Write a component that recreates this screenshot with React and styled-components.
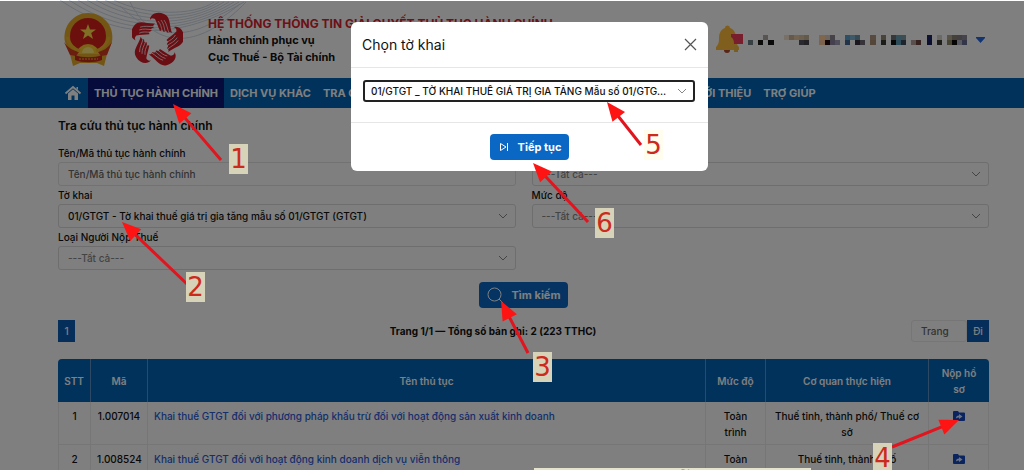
import React from 'react';
import styled, { createGlobalStyle } from 'styled-components';

const GlobalStyle = createGlobalStyle`
* { box-sizing: border-box; }
body {
  margin: 0;
  background: #fff;
  color: #111;
  font-family: Inter, "Noto Sans", sans-serif;
  font-size: 10px;
  font-weight: 500;
}
button, input, select { font: inherit; color: inherit; margin: 0; }
h1, h2, p { margin: 0; }
a { text-decoration: none; }
`

const Page = styled.div`
position: relative;
height: 100vh;
overflow: hidden;
`

const Header = styled.header`
position: relative;
display: flex;
align-items: center;
height: 78px;
padding: 2px 39px 0 62px;
`

const Waves = styled.svg`
position: absolute;
top: 0;
left: 60px;
`

const Logos = styled.div`
position: relative;
display: flex;
gap: 17px;
margin-right: 25px;
`

const SiteName = styled.div`
position: relative;
flex: 1;
font-size: 11px;
font-weight: 700;
line-height: 17px;
white-space: nowrap;

h1 {
  color: #d8222c;
  font-size: 12px;
  font-weight: 700;
  line-height: 17px;
}
`

const Account = styled.button`
display: flex;
align-items: center;
gap: 4px;
padding: 0;
border: 0;
background: none;
`

const Nav = styled.nav`
display: flex;
height: 30px;
padding-left: 58px;
background: #0064b8;
white-space: nowrap;
`

const NavLink = styled.a`
display: flex;
align-items: center;
padding: 0 6px;
color: #fff;
font-size: 11px;
font-weight: 700;
background: ${props => props.$active ? '#0a1878' : 'none'};
`

const Main = styled.main`
padding: 9px 35px 0 58px;
`

const H2 = styled.h2`
margin-bottom: 9px;
font-size: 12px;
font-weight: 600;
line-height: 18px;
`

const Fields = styled.div`
display: grid;
grid-template-columns: 1fr 1fr;
column-gap: 16px;
`

const Label = styled.label`
display: block;
height: 18px;
line-height: 18px;
`

const SelectBox = styled.div`
position: relative;

svg {
  position: absolute;
  top: 8px;
  right: 8px;
  pointer-events: none;
}
`

const Select = styled.select`
appearance: none;
display: block;
width: 100%;
height: 24px;
padding: 0 24px 0 9px;
border: 1px solid #dcdcdc;
border-radius: 3px;
background: #fff;
color: ${props => props.$empty ? '#888' : '#111'};
text-overflow: ellipsis;
`

const Input = styled.input`
display: block;
width: 100%;
height: ${props => props.$small ? '22px' : '24px'};
padding: 0 9px;
border: 1px solid ${props => props.$small ? '#ececec' : '#e4e4e4'};
border-radius: 3px;
background: #fff;

&::placeholder { color: #666; opacity: 1; }
`

const Button = styled.button`
display: flex;
align-items: center;
gap: 8px;
height: 26px;
padding: 0 8px;
border: 0;
border-radius: 4px;
background: #0a68c4;
color: #fff;
font-size: 11px;
font-weight: 700;
`

const Center = styled.div`
display: flex;
justify-content: center;
padding-top: 12px;
`

const Pager = styled.div`
display: grid;
grid-template-columns: 17px 1fr 78px;
align-items: center;
margin: 12px 0 17px;

p {
  font-weight: 700;
  text-align: center;
}
`

const Square = styled.button`
width: ${props => props.$wide ? '22px' : '17px'};
height: 22px;
padding: 0;
border: 0;
flex: none;
background: #0a5cb4;
color: #fff;
`

const GoTo = styled.div`
display: flex;
`

const Table = styled.table`
width: 100%;
table-layout: fixed;
border-spacing: 0;
line-height: 16px;
text-align: center;

th {
  height: 43px;
  padding: 0 6px;
  border-right: 1px solid #5c92c8;
  background: #0064b8;
  color: #fff;
  font-weight: 600;
}
th:first-child { border-top-left-radius: 4px; }
th:last-child { border-top-right-radius: 4px; border-right: 0; }
td {
  height: 43px;
  padding: 6px 6px 4px;
  border-right: 1px solid #ececec;
  border-bottom: 1px solid #ececec;
  vertical-align: top;
}
td:first-child { border-left: 1px solid #ececec; }
td:nth-child(3) { text-align: left; }
td a { color: #2c5cd8; }
td svg { display: block; margin: 3px auto; }
`

const Backdrop = styled.div`
position: absolute;
inset: 1px 0 0;
display: flex;
justify-content: center;
align-items: flex-start;
padding: 21px 0 0 35px;
background: rgba(0, 0, 0, 0.5);
`

const Modal = styled.section`
width: 357px;
border-radius: 6px;
background: #fff;
`

const ModalHeader = styled.header`
display: flex;
justify-content: space-between;
align-items: center;
height: 46px;
padding: 0 11px;
border-bottom: 1px solid #e6e6e6;

h2 { font-size: 14px; font-weight: 400; }
button { display: flex; padding: 0; border: 0; background: none; }
`

const ModalBody = styled.div`
padding: 12px 13px 20px 12px;

select {
  height: 22px;
  padding-right: 24px;
  padding-left: 6px;
  border: 2px solid #222;
}
svg { top: 7px; }
`

const ModalFooter = styled.footer`
display: flex;
justify-content: center;
padding: 11px 0;
border-top: 1px solid #e6e6e6;
`

const Arrows = styled.svg`
position: absolute;
top: 0;
left: 0;
pointer-events: none;
`

const Step = styled.span`
position: absolute;
top: ${props => props.$y}px;
left: ${props => props.$x}px;
width: 19px;
height: 30px;
background: ${props => props.$light ? '#fffdee' : '#d6d3b8'};
color: #cc2a1c;
font-family: "DejaVu Sans", sans-serif;
font-size: 26px;
font-weight: 400;
line-height: 30px;
display: flex;
justify-content: center;
`

const Note = styled.div`
position: absolute;
top: 468px;
left: 534px;
width: 277px;
height: 30px;
background: #e6e3cc;
color: #cc2a1c;
font: 700 14px/4px "DejaVu Sans", sans-serif;
text-align: center;
text-indent: 24px;
`

const navItems = [
  'DỊCH VỤ KHÁC',
  'TRA CỨU',
  'ĐĂNG KÝ NỘP THUẾ',
  'HỎI - ĐÁP',
  'THANH TOÁN THUẾ',
  'GIỚI THIỆU',
  'TRỢ GIÚP',
]

const rows = [
  ['1', '1.007014', 'Khai thuế GTGT đối với phương pháp khấu trừ đối với hoạt động sản xuất kinh doanh', 'Toàn trình', 'Thuế tỉnh, thành phố/ Thuế cơ sở'],
  ['2', '1.008524', 'Khai thuế GTGT đối với hoạt động kinh doanh dịch vụ viễn thông', 'Toàn trình', 'Thuế tỉnh, thành phố'],
]

// number, label x, label y, tail x, tail y, tip x, tip y
const steps = [
  [1, 229, 144, 221, 160, 173, 104],
  [2, 186, 272, 187, 284, 122, 222],
  [3, 533, 352, 528, 353, 501, 301],
  [4, 873, 443, 892, 447, 959, 420],
  [5, 644, 130, 641, 145, 607, 102],
  [6, 595, 208, 588, 222, 533, 163],
]

// column, row, colour of the blurred account name
const pixels = [
  [0, 1, '#6e8288'], [2, 1, '#181818'], [3, 0, '#b0a8a4'], [4, 1, '#141414'],
  [7, 0, '#f4e2cc'], [8, 0, '#cdb094'], [9, 0, '#e6c8a4'], [10, 0, '#d8c0a0'], [11, 0, '#c8b498'],
  [10, 1, '#545460'], [11, 1, '#48484c'],
  [14, 0, '#ffcc98'], [14, 1, '#f6c69a'], [15, 0, '#e0ccc0'], [16, 0, '#8a8490'], [15, 1, '#200c10'], [16, 1, '#88809c'], [17, 1, '#a09cb4'],
  [19, 0, '#5aa0cc'], [20, 0, '#7cb4d0'], [19, 1, '#446894'], [21, 0, '#6c94ac'], [21, 1, '#34303c'], [22, 1, '#6c6870'],
  [24, 0, '#b09880'], [24, 1, '#a88c70'], [26, 0, '#908878'], [26, 1, '#383830'],
  [28, 0, '#6c7074'], [29, 0, '#6ca0b4'], [30, 0, '#7c98a8'], [28, 1, '#101010'], [29, 1, '#5c98b4'], [30, 1, '#3c4858'],
  [32, 1, '#b8a09c'], [33, 1, '#6c4440'], [35, 0, '#1c2468'], [35, 1, '#181c5c'],
  [37, 0, '#d8d4c8'], [37, 1, '#403c34'], [39, 0, '#b0a890'], [39, 1, '#908868'],
  [40, 0, '#888074'], [41, 0, '#847c84'], [42, 0, '#8c8894'], [40, 1, '#0c0808'], [41, 1, '#b4b4c4'], [42, 1, '#646c90'],
]

const Emblem = () => (
  <svg width="53" height="56" viewBox="0 0 53 56" aria-hidden="true">
    <path d="M8 42 L3 30 C0 14 12 1 26 1 C41 1 53 14 50 30 L45 42 L42 54 L35 51 H18 L11 54Z" fill="#e8ac28" />
    <circle cx="26" cy="24" r="18" fill="#d8201c" />
    <path d="M26 12l2 5.500h6l-4.800 3.600 1.800 5.800-5-3.500-5 3.500 1.800-5.800-4.800-3.600h6z" fill="#ffe04c" />
    <path d="M15 42a11 10 0 0 1 22 0z" fill="#f8c830" />
    <path d="M20 41a6 6 0 0 1 12 0z" fill="#ffe878" />
    <path d="M2 30 C6 36 12 39 17 40 L14 44 L8 43Z M50 30 C46 36 41 39 36 40 L39 44 L45 43Z" fill="#d43c20" />
    <path d="M5 25c2 7 7 12 13 14M47 25c-2 7-7 12-13 14" fill="none" stroke="#f0b82c" strokeWidth="3" />
    <path d="M13 43 C20 46 33 46 40 43 L40 48 C33 51 20 51 13 48Z" fill="#c82c1c" />
    <path d="M17 47h19" stroke="#f0b030" strokeDasharray="2 1" />
  </svg>
)

const Hands = () => (
  <svg width="51" height="56" viewBox="-25 -28 51 56" aria-hidden="true">
    {[0, 72, 144, 216, 288].map(angle => (
      <g key={angle} transform={`rotate(${angle})`}>
        <path d="M-7 -20 C-7 -26 0 -29 7 -26 C14 -23 12 -15 15 -7 L13 -8 L11 -7 L9 -9 L7 -8 L5 -10 L3 -9 C1 -13 0 -17 -2 -21 C-4 -22 -6 -22 -7 -20Z" fill="#d41c28" />
        <path d="M1 -19 C4 -16 4 -13 5.500 -8 M4 -20 C7 -16 7 -13 8.500 -7 M7 -20 C10 -16 10 -12 12 -7" fill="none" stroke="#fff" strokeWidth="0.700" />
      </g>
    ))}
  </svg>
)

const Bell = () => (
  <svg width="28" height="30" viewBox="0 0 28 30" aria-hidden="true">
    <path d="M9 3a2.500 2.500 0 0 1 5 0c5 2 6 6 6 11 0 4 1 6 3 8v3H0v-3c2-2 3-4 3-8 0-5 1-9 6-11z" fill="#ffbc3c" />
    <path d="M18 21h4v6h-4z" fill="#f0bc48" />
    <path d="M8 25a3 3 0 0 0 6 0z" fill="#b04c30" />
    <path d="M15 9h12v10h-9c0-4-1-6-3-7z" fill="#f03c58" />
  </svg>
)

const Chevron = () => (
  <svg width="10" height="8" viewBox="0 0 10 8" fill="none" stroke="#888" aria-hidden="true">
    <path d="M1 2l4 4 4-4" />
  </svg>
)

const FolderIcon = () => (
  <svg width="12" height="10" viewBox="0 0 12 10" aria-hidden="true">
    <path d="M1 0h4l1 1.500h5a1 1 0 0 1 1 1V9a1 1 0 0 1-1 1H1a1 1 0 0 1-1-1V1a1 1 0 0 1 1-1z" fill="#1448c0" />
    <path d="M3 7.500c0-2 1-3 3-3V3l3.500 2.500L6 8V6.500c-1 0-2 0-3 1z" fill="#dce8ff" />
  </svg>
)

const Dropdown = ({ id, label, value, empty }) => (
  <div>
    <Label htmlFor={id}>{label}</Label>
    <SelectBox>
      <Select id={id} $empty={empty}>
        <option>{value}</option>
      </Select>
      <Chevron />
    </SelectBox>
  </div>
)

// Pull the shaft back from the tip so it ends inside the arrow head
const Arrow = ({ x1, y1, x2, y2 }) => {
  const length = Math.hypot(x2 - x1, y2 - y1)
  const angle = Math.atan2(y2 - y1, x2 - x1) * 180 / Math.PI
  return (
    <g transform={`translate(${x2} ${y2}) rotate(${angle})`}>
      <path d={`M${-length} 0H-14`} stroke="#e2141e" strokeWidth="3" />
      <path d="M0 0L-19 -8V8Z" fill="#ff1414" />
    </g>
  )
}

const App = () => (
  <>
    <GlobalStyle />
    <Page>
      <Header>
        <Waves width="190" height="78" viewBox="0 0 190 78" fill="none" stroke="#d0dce8" aria-hidden="true">
          {[0, 1, 2, 3, 4, 5, 6].map(i => (
            <path key={i} d={`M${i * 9} 0 C${50 + i * 6} ${34 - i * 3} ${110 + i * 4} ${46 - i * 5} ${184 - i * 5} 2`} />
          ))}
          <path d="M60 6C100 44 136 40 180 4M70 2C100 60 150 40 186 2" />
        </Waves>
        <Logos>
          <Emblem />
          <Hands />
        </Logos>
        <SiteName>
          <h1>HỆ THỐNG THÔNG TIN GIẢI QUYẾT THỦ TỤC HÀNH CHÍNH</h1>
          <p>Hành chính phục vụ</p>
          <p>Cục Thuế - Bộ Tài chính</p>
        </SiteName>
        <Account aria-label="Tài khoản">
          <Bell />
          <svg width="224" height="10" viewBox="0 0 224 10" shapeRendering="crispEdges" aria-hidden="true">
            {pixels.map(([col, row, fill]) => (
              <rect key={`${col}-${row}`} x={col * 5.1} y={row * 5} width="5.100" height="5" fill={fill} />
            ))}
          </svg>
          <svg width="9" height="6" viewBox="0 0 9 6" aria-hidden="true"><path d="M0 0h9v1L4.500 6 0 1z" fill="#2468e0" /></svg>
        </Account>
      </Header>

      <Nav>
        <NavLink href="#" aria-label="Trang chủ">
          <svg width="18" height="16" viewBox="0 0 18 16" aria-hidden="true">
            <path d="M1.500 8.500L9 2l7.500 6.500" fill="none" stroke="#fff" strokeWidth="1.800" />
            <path d="M4 8.500l5-4.200 5 4.200V15h-3.500v-4.500h-3V15H4zM12.500 2H14v3l-1.500-1z" fill="#fff" />
          </svg>
        </NavLink>
        <NavLink href="#" $active>THỦ TỤC HÀNH CHÍNH</NavLink>
        {navItems.map(item => <NavLink href="#" key={item}>{item}</NavLink>)}
      </Nav>

      <Main>
        <H2>Tra cứu thủ tục hành chính</H2>
        <Fields>
          <div>
            <Label htmlFor="name">Tên/Mã thủ tục hành chính</Label>
            <Input id="name" placeholder="Tên/Mã thủ tục hành chính" />
          </div>
          <Dropdown id="field" label="Lĩnh vực" value="---Tất cả---" empty />
          <Dropdown id="form" label="Tờ khai" value="01/GTGT - Tờ khai thuế giá trị gia tăng mẫu số 01/GTGT (GTGT)" />
          <Dropdown id="level" label="Mức độ" value="---Tất cả---" empty />
          <Dropdown id="payer" label="Loại Người Nộp Thuế" value="---Tất cả---" empty />
        </Fields>

        <Center>
          <Button>
            <svg width="17" height="17" viewBox="0 0 17 17" fill="none" stroke="#fff" aria-hidden="true">
              <circle cx="7.500" cy="7.500" r="6.500" />
              <path d="M12 12l4 4" />
            </svg>
            Tìm kiếm
          </Button>
        </Center>

        <Pager>
          <Square>1</Square>
          <p>Trang 1/1 — Tổng số bản ghi: 2 (223 TTHC)</p>
          <GoTo>
            <Input $small aria-label="Trang" placeholder="Trang" />
            <Square $wide>Đi</Square>
          </GoTo>
        </Pager>

        <Table>
          <colgroup>
            <col width="33" /><col width="57" /><col /><col width="60" /><col width="163" /><col width="60" />
          </colgroup>
          <thead>
            <tr>
              <th>STT</th><th>Mã</th><th>Tên thủ tục</th><th>Mức độ</th><th>Cơ quan thực hiện</th><th>Nộp hồ sơ</th>
            </tr>
          </thead>
          <tbody>
            {rows.map(([no, code, name, level, office]) => (
              <tr key={code}>
                <td>{no}</td>
                <td>{code}</td>
                <td><a href="#">{name}</a></td>
                <td>{level}</td>
                <td>{office}</td>
                <td><a href="#" aria-label="Nộp hồ sơ"><FolderIcon /></a></td>
              </tr>
            ))}
          </tbody>
        </Table>
      </Main>

      <Backdrop>
        <Modal role="dialog" aria-labelledby="modal-title">
          <ModalHeader>
            <h2 id="modal-title">Chọn tờ khai</h2>
            <button aria-label="Đóng">
              <svg width="13" height="13" viewBox="0 0 13 13" stroke="#555" strokeWidth="1.200" aria-hidden="true">
                <path d="M1 1l11 11M12 1L1 12" />
              </svg>
            </button>
          </ModalHeader>
          <ModalBody>
            <SelectBox>
              <Select aria-label="Tờ khai">
                <option>01/GTGT _ TỜ KHAI THUẾ GIÁ TRỊ GIA TĂNG Mẫu số 01/GTGT (GTGT)</option>
              </Select>
              <Chevron />
            </SelectBox>
          </ModalBody>
          <ModalFooter>
            <Button>
              <svg width="12" height="10" viewBox="0 0 12 10" fill="none" stroke="#fff" aria-hidden="true">
                <path d="M2.500 1.500v7L8 5zM9.500 1v8" />
              </svg>
              Tiếp tục
            </Button>
          </ModalFooter>
        </Modal>
      </Backdrop>

      <Note>~</Note>
      <Arrows width="1024" height="470" aria-hidden="true">
        {steps.map(([n, , , x1, y1, x2, y2]) => <Arrow key={n} x1={x1} y1={y1} x2={x2} y2={y2} />)}
      </Arrows>
      {steps.map(([n, x, y]) => <Step key={n} $x={x} $y={y} $light={n === 5}>{n}</Step>)}
    </Page>
  </>
)

export default App;
